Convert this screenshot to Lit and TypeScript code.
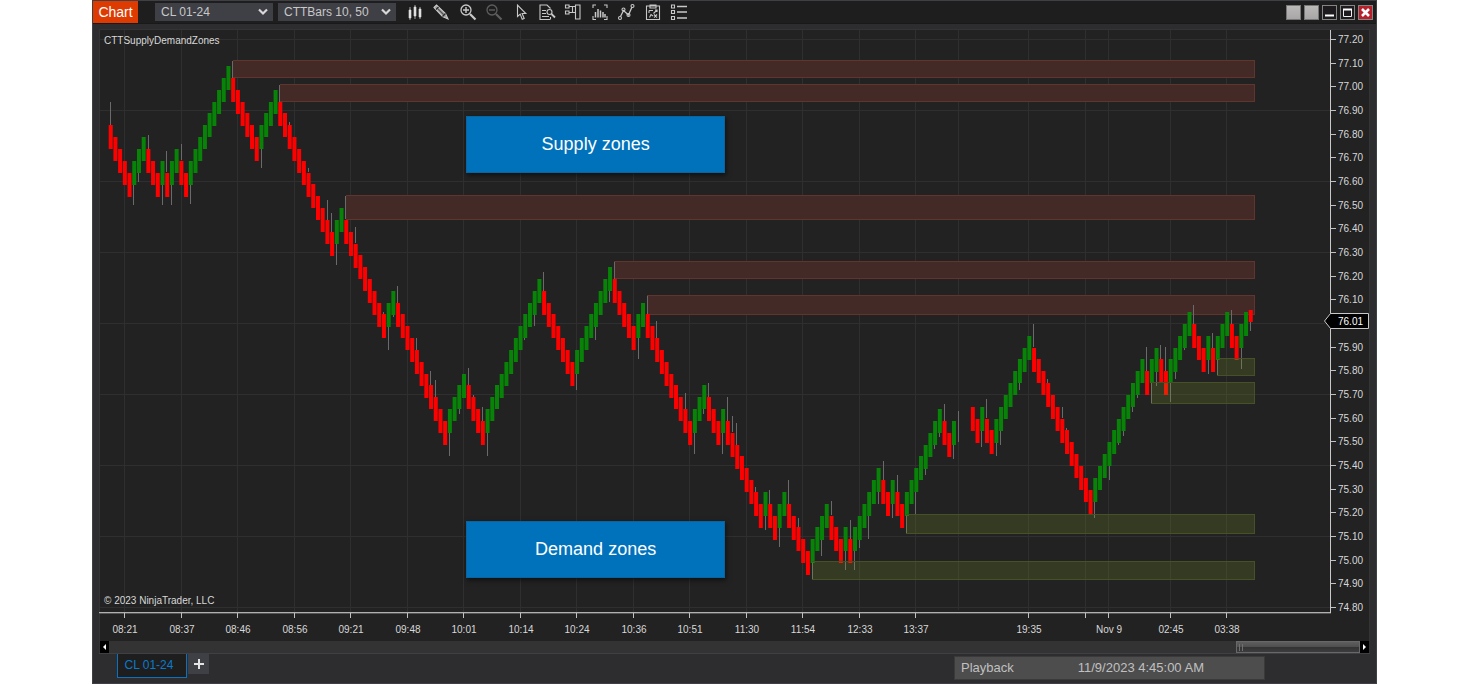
import { LitElement, html, svg, css } from "lit";
import { customElement } from "lit/decorators.js";

// Trend legs, positive = rising bars, negative = falling bars.
const MORNING = [
  -5, 3, -3, 1, -1, 2, -2, 9, -6, 4, -12, 2, -9, 2, -11, 4, -4, 12, -7, 8, -5,
  2, -10, 3, -3, 1, -8, 1, -2, 2, -5, 4, -3, 1, -1, 6, -2, 1, -2, 8, -2, 1,
];
const EVENING = [-2, 1, -2, 8, -13, 11, -1, 2, -2, 5, -3, 1, -1, 3, -2, 2];

const STEP_X = 4.711;
const FIRST_X = 110.7;
const STEP_Y = 11.83;
const BASE_Y = 125.2;

interface Bar {
  x: number;
  y: number;
  h: number;
  up: boolean;
}

function buildBars(legs: number[], firstIndex: number, firstLevel: number): Bar[] {
  const bars: Bar[] = [];
  let index = firstIndex;
  let level = firstLevel;
  let started = false;
  for (const leg of legs) {
    for (let n = 0; n < Math.abs(leg); n++) {
      if (started) level += leg > 0 ? -1 : 1;
      started = true;
      bars.push({
        x: FIRST_X + index * STEP_X - 2,
        y: Math.round(BASE_Y + level * STEP_Y),
        h: 24,
        up: leg > 0,
      });
      index++;
    }
  }
  return bars;
}

const BARS: Bar[] = [
  ...buildBars(MORNING, 0, 0),
  ...buildBars(EVENING, 183, 23.8),
  { x: FIRST_X + 242 * STEP_X - 2, y: 310, h: 12, up: false },
];

// Wicks: bar index, upper end, lower end.
const WICKS: [number, number, number][] = [
  [0, 102, 125], [5, 184, 205], [6, 172, 182], [8, 135, 149], [11, 184, 205],
  [12, 151, 172], [13, 184, 205], [15, 144, 160], [17, 184, 204], [26, 61, 78],
  [32, 149, 168], [36, 85, 102], [38, 122, 125], [42, 168, 172], [46, 200, 220],
  [47, 213, 232], [48, 243, 265], [50, 196, 219], [52, 227, 243], [58, 312, 315],
  [59, 326, 350], [60, 315, 317], [61, 286, 303], [65, 338, 350], [68, 371, 385],
  [69, 380, 398], [72, 433, 456], [74, 409, 414], [76, 368, 385], [77, 395, 398],
  [79, 407, 421], [80, 433, 456], [88, 338, 340], [90, 315, 326], [92, 272, 291],
  [99, 374, 390], [103, 326, 340], [106, 291, 302], [107, 262, 279], [112, 338, 359],
  [114, 296, 314], [116, 321, 338], [122, 393, 409], [124, 433, 454], [126, 409, 414],
  [127, 383, 398], [130, 432, 454], [131, 397, 421], [132, 416, 432], [133, 423, 445],
  [137, 487, 492], [139, 515, 530], [140, 490, 504], [142, 528, 547], [144, 480, 504],
  [146, 518, 528], [149, 563, 580], [151, 539, 556], [153, 501, 515], [156, 551, 570],
  [157, 520, 539], [158, 551, 570], [159, 539, 548], [161, 515, 539], [163, 492, 504],
  [164, 461, 480], [166, 504, 518], [167, 475, 492], [169, 515, 534], [171, 492, 514],
  [173, 468, 475], [175, 445, 449], [176, 432, 437], [177, 404, 421], [179, 445, 459],
  [180, 411, 442], [185, 430, 447], [186, 399, 418], [188, 442, 456], [189, 430, 445],
  [193, 383, 390], [196, 324, 347], [199, 379, 383], [202, 407, 418], [203, 428, 430],
  [209, 501, 518], [212, 465, 480], [214, 442, 445], [215, 430, 436], [217, 407, 412],
  [218, 395, 398], [220, 347, 371], [221, 383, 404], [222, 371, 386], [223, 345, 359],
  [224, 347, 371], [225, 383, 402], [226, 371, 379], [228, 348, 350], [230, 305, 324],
  [233, 359, 374], [234, 333, 348], [235, 359, 376], [238, 310, 324], [240, 348, 369],
  [242, 321, 331],
];

// Zones: left, top, bottom.
const ZONE_END = 1254;
const SUPPLY = [[233, 60, 77], [280, 84, 101], [346, 195, 219], [614, 261, 278], [647, 295, 314]];
const DEMAND = [[812, 561, 579], [906, 514, 533], [1151, 382, 403], [1217, 358, 375]];

const TIMES: [number, string][] = [
  [124, "08:21"], [181, "08:37"], [237, "08:46"], [294, "08:56"], [350, "09:21"],
  [407, "09:48"], [463, "10:01"], [520, "10:14"], [576, "10:24"], [633, "10:36"],
  [689, "10:51"], [746, "11:30"], [802, "11:54"], [859, "12:33"], [915, "13:37"],
  [1028, "19:35"], [1085, ""], [1108, "Nov 9"], [1170, "02:45"], [1226, "03:38"],
];
const SESSION_BREAK = 958;

const PRICES = Array.from({ length: 25 }, (_, i) => ({
  y: Math.round(39 + (i * 71) / 3),
  text: (77.2 - i * 0.1).toFixed(2),
  major: i % 3 === 0,
  current: i === 12,
}));

const L = "#c8c8c8";
const TOOLS = [
  { label: "Chart style", art: svg`<path d="M3 3v13M8 1v14M13 3v12" stroke="#999"/><path d="M2 6h2v8H2zM7 3h2v9H7zM12 5h2v8h-2z" fill="#e0e0e0" stroke="#e0e0e0" stroke-width=".6"/>` },
  { label: "Drawing tools", art: svg`<path d="M1 3.500L3.500 1l9 8.500 2.500 5.500-5.500-2.500z" fill="#a0a0a0" stroke="${L}"/><path d="M3 5.500L5.500 3M9.500 12.500l3-3" stroke="#222"/><path d="M5 5l6 6" stroke="#555"/>` },
  { label: "Zoom in", art: svg`<circle cx="6" cy="6" r="5" stroke-width="1.300"/><path d="M3 6h6M6 3v6" stroke-width="1.400"/><path d="M10 10l5.500 5.500" stroke-width="2.200"/>` },
  { label: "Zoom out", art: svg`<g stroke="#5e5e5e"><circle cx="6" cy="6" r="5" stroke-width="1.300"/><path d="M3 6h6" stroke-width="1.400"/><path d="M10 10l5.500 5.500" stroke-width="2.200"/></g>` },
  { label: "Pointer", art: svg`<path d="M4.500 1v11.500l2.700-2.400 2 5.200 2-.8-2.100-5h3.700z"/>` },
  { label: "Data box", art: svg`<path d="M11 15.500H1V1h7l3.500 3.500M11.500 13v2.500M3 6.500h4M3 9.500h4M3 12.500h7"/><circle cx="10.500" cy="8" r="2.500"/><path d="M12.500 10l3.500 3.500" stroke-width="1.800"/>` },
  { label: "Chart trader", art: svg`<path d="M10.500 1h4.500v14h-4.500zM4 2.500h6.500M4 8.500h6.500M7.500 3v5.500"/><path d="M.5 1h3.500v3H.5zM.5 7h3.500v3H.5z"/>` },
  { label: "Indicators", art: svg`<path d="M1 4V1h3M12 1h3v3M15 12v3.500h-3M4 15.500H1V12"/><path d="M3.500 8v5.500M6 5v8.500M8.500 6.500v7M11 8v5.500M13 10v3.500" stroke-width="1.500"/>` },
  { label: "Strategies", art: svg`<path d="M2.500 12.500l3-6 5 4.500 3.500-8" stroke-width="1.300"/><circle cx="2" cy="14" r="1.500"/><circle cx="5.500" cy="5.500" r="1.500"/><circle cx="10.500" cy="11" r="1.500"/><circle cx="14.500" cy="2" r="1.500"/>` },
  { label: "Performance", art: svg`<path d="M1.500 2h13v13.500h-13zM5 1h6v3H5z"/><path d="M4 6.500h4M4 6.500v2.500M12 6l-3.500 3.500M10 6h2v2M4.500 13.500l1.500-3 2 1.500M9 10.500l3 3M12 10.500l-3 3"/>` },
  { label: "Properties", art: svg`<path d="M.5 1h3v3h-3zM.5 6.500h3v3h-3zM.5 12.500h3v3h-3z"/><path d="M6 2.500h10M6 8h10M6 14h10" stroke-width="1.300"/>` },
];

@customElement("app-root")
export class AppRoot extends LitElement {
  static styles = css`
    :host {
      display: block;
      background: #fff;
      font-family: "Liberation Sans", Arial, sans-serif;
    }
    * {
      box-sizing: border-box;
    }
    button {
      border: 0;
      padding: 0;
      margin: 0;
      background: none;
      font: inherit;
      color: inherit;
      display: grid;
      place-items: center;
    }
    .window {
      margin: 0 92px;
      background: #2d2d30;
      border: 1px solid #3f3f46;
    }
    .titlebar {
      display: flex;
      height: 23px;
      background: #1e1e1e;
      border-bottom: 1px solid #19191a;
      color: #c8c8c8;
    }
    .brand {
      width: 45px;
      height: 22px;
      background: #dd3b02;
      color: #fff;
      font-size: 14px;
    }
    .pickers {
      display: flex;
      gap: 5px;
      margin: 2px 11px 0 17px;
    }
    .picker {
      display: grid;
      width: 118px;
      height: 18px;
      align-items: center;
    }
    .picker select {
      grid-area: 1 / 1;
      appearance: none;
      width: 100%;
      height: 18px;
      border: 0;
      border-radius: 0;
      padding: 0 20px 0 6px;
      background: #3f3f46;
      color: #c8c8c8;
      font: 12px "Liberation Sans", Arial, sans-serif;
    }
    .chevron {
      grid-area: 1 / 1;
      justify-self: end;
      margin-right: 5px;
      width: 10px;
      height: 8px;
      pointer-events: none;
    }
    .tools {
      display: flex;
      justify-content: space-between;
      width: 280px;
      height: 22px;
    }
    .tool svg {
      display: block;
      width: 16px;
      height: 16px;
      overflow: visible;
      fill: none;
      stroke: #c8c8c8;
      stroke-width: 1.1;
    }
    .controls {
      display: flex;
      gap: 3px;
      margin: 4px 3px 0 auto;
    }
    .control {
      width: 15px;
      height: 15px;
      border: 1px solid #858585;
      background: #1d1b1e;
    }
    .control svg {
      display: block;
      width: 13px;
      height: 13px;
    }
    .link {
      background: linear-gradient(#bbb8b8, #a9a6a7);
      border-color: #777;
    }
    .close {
      background: #b71f2b;
    }
    .body {
      margin: 5px 6px 0;
    }
    .chart {
      position: relative;
      background: #222;
    }
    .plot {
      display: block;
      width: 100%;
      height: auto;
      font-size: 10px;
    }
    .callout {
      position: absolute;
      left: 28.9%;
      width: 20.35%;
      height: 9.3%;
      display: grid;
      place-items: center;
      background: #0072bc;
      border: 1px solid #0a64a0;
      box-shadow: 1px 2px 5px rgba(0, 0, 0, 0.6);
      color: #fff;
      font-size: 18px;
    }
    .supply {
      top: 14.2%;
    }
    .demand {
      top: 80.4%;
    }
    .scroll {
      display: flex;
      height: 13px;
      background: #333;
      border-bottom: 1px solid #3f3f46;
      padding: 0 1px;
    }
    .arrow {
      width: 9px;
      height: 12px;
      background: #000;
    }
    .arrow svg {
      display: block;
      width: 5px;
      height: 6px;
      fill: #fff;
    }
    .track {
      flex: 1;
      display: flex;
      justify-content: flex-end;
    }
    .thumb {
      width: 9.9%;
      border: 1px solid #686868;
      background: linear-gradient(#5e5e5e, #505050 45%, #333 50%, #3c3c3c);
      padding: 2px 2px;
    }
    .grip {
      width: 4px;
      height: 7px;
      border: solid #707070;
      border-width: 0 1px;
    }
    .footer {
      display: flex;
      align-items: flex-start;
      height: 29px;
      margin: 0 6px;
    }
    .tab {
      width: 70px;
      height: 24px;
      margin-left: 18px;
      background: #1e1e1e;
      border: 1px solid #0a72c0;
      border-top: 0;
      color: #0a7acc;
      font-size: 12px;
      padding: 0 6px 2px 0;
    }
    .add {
      width: 21px;
      height: 20px;
      margin-left: 1px;
      background: #3f3f46;
    }
    .add svg {
      display: block;
      width: 10px;
      height: 10px;
      stroke: #e4e4e4;
      stroke-width: 2;
    }
    .playback {
      display: flex;
      align-items: center;
      width: 311px;
      height: 24px;
      margin: 2px 105px 0 auto;
      padding: 0 0 2px 6px;
      gap: 64px;
      background: #4d4d4d;
      border: 1px solid #3a3a3a;
      color: #c0c0c0;
      font-size: 13px;
    }
  `;

  private picker(label: string, value: string) {
    return html`<div class="picker">
      <select aria-label=${label}><option>${value}</option></select>
      <svg class="chevron" viewBox="0 0 10 8"><path d="M1 1.500L5 5.500 9 1.500" fill="none" stroke="#d8d8d8" stroke-width="2.200"/></svg>
    </div>`;
  }

  private plot() {
    const zone = ([x, top, bottom]: number[], fill: string, line: string) => svg`
      <rect x=${x} y=${top} width=${ZONE_END - x + 1} height=${bottom - top + 1} fill=${fill}/>
      <path d="M${x} ${top + 0.5}H${ZONE_END + 1}M${x} ${bottom + 0.5}H${ZONE_END + 1}M${ZONE_END + 0.5} ${top}V${bottom}" fill="none" stroke=${line}/>`;
    return html`<svg class="plot" viewBox="99 29 1271 612" role="img" aria-label="CL 01-24 price chart">
      <path d="M99 29.500H1370M99.500 29V641M1369.500 29V641" stroke="#343436"/>
      <g stroke="#2f2f2f">
        ${PRICES.filter((p) => p.major).map((p) => svg`<path d="M100 ${p.y + 0.5}H1330"/>`)}
        ${TIMES.map(([x]) => svg`<path d="M${x + 0.5} 30V613"/>`)}
        <path d="M${SESSION_BREAK + 0.5} 30V610"/>
      </g>
      ${SUPPLY.map((z) => zone(z, "#432a27", "#60352e"))}
      <g stroke="#6a6a6a">
        ${WICKS.map(([i, a, b]) => svg`<path d="M${Math.floor(FIRST_X + i * STEP_X - 0.3) + 0.5} ${a}V${b}"/>`)}
      </g>
      ${BARS.map((b) => svg`<rect x=${b.x} y=${b.y} width="4" height=${b.h} fill=${b.up ? "#078307" : "#ff0000"}/>`)}
      ${DEMAND.map((z) => zone(z, "rgba(124,159,34,.2)", "#465128"))}
      <path d="M99 612.500H1331" stroke="#b0b0b0"/>
      <path d="M99 613.500H1331" stroke="#555"/>
      <path d="M1330.500 30V613" stroke="#c8c8c8"/>
      <g fill="#d8d8d8">
        ${TIMES.map(([x, t]) => svg`<path d="M${x + 0.5} 613V618" stroke="#c0c0c0"/><text x=${x + 1} y="633" text-anchor="middle">${t}</text>`)}
        ${PRICES.map((p) => (p.current ? "" : svg`<path d="M1331 ${p.y + 0.5}H1336" stroke="#c0c0c0"/><text x="1338" y=${p.y + 4}>${p.text}</text>`))}
        <text x="104" y="44">CTTSupplyDemandZones</text>
        <text x="104" y="604">© 2023 NinjaTrader, LLC</text>
      </g>
      <path d="M1324.500 321L1330.500 313.500H1368.500V328.500H1330.500Z" fill="#000" stroke="#c8c8c8"/>
      <text x="1338" y="325" fill="#fff">76.01</text>
    </svg>`;
  }

  render() {
    return html`<div class="window">
      <header class="titlebar">
        <button class="brand">Chart</button>
        <div class="pickers">
          ${this.picker("Instrument", "CL 01-24")} ${this.picker("Interval", "CTTBars 10, 50")}
        </div>
        <div class="tools">
          ${TOOLS.map((t) => html`<button class="tool" aria-label=${t.label}><svg viewBox="0 0 16 16">${t.art}</svg></button>`)}
        </div>
        <div class="controls">
          <button class="control link" aria-label="Link instrument"></button>
          <button class="control link" aria-label="Link interval"></button>
          <button class="control" aria-label="Minimize"><svg viewBox="0 0 13 13"><path d="M2 9.500h9" stroke="#fff" stroke-width="2"/></svg></button>
          <button class="control" aria-label="Maximize"><svg viewBox="0 0 13 13"><path d="M2.500 3v7.500h8V3" fill="none" stroke="#eee"/><path d="M2 3.500h9" stroke="#fff" stroke-width="2"/></svg></button>
          <button class="control close" aria-label="Close"><svg viewBox="0 0 13 13"><path d="M3 3l7 7M10 3l-7 7" stroke="#fff" stroke-width="2.600"/></svg></button>
        </div>
      </header>
      <main class="body">
        <div class="chart">
          ${this.plot()}
          <div class="callout supply">Supply zones</div>
          <div class="callout demand">Demand zones</div>
        </div>
        <div class="scroll">
          <button class="arrow" aria-label="Scroll left"><svg viewBox="0 0 5 6"><path d="M4 0v6L1 3z"/></svg></button>
          <div class="track"><div class="thumb"><div class="grip"></div></div></div>
          <button class="arrow" aria-label="Scroll right"><svg viewBox="0 0 5 6"><path d="M1 0v6l3-3z"/></svg></button>
        </div>
      </main>
      <footer class="footer">
        <button class="tab">CL 01-24</button>
        <button class="add" aria-label="Add tab"><svg viewBox="0 0 10 10"><path d="M0 5h10M5 0v10"/></svg></button>
        <div class="playback"><span>Playback</span><time>11/9/2023 4:45:00 AM</time></div>
      </footer>
    </div>`;
  }
}
